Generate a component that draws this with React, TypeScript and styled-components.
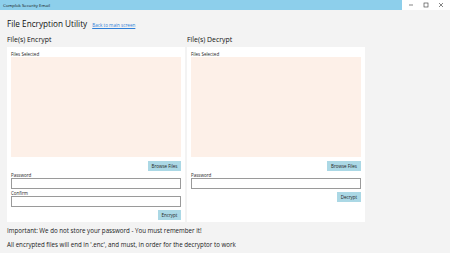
import React from "react";
import styled, { createGlobalStyle } from "styled-components";

const GlobalStyle = createGlobalStyle`
  html, body { margin: 0; padding: 0; }
  body {
    background: #f3f3f3;
    font-family: "Open Sans", "Noto Sans", "Liberation Sans", sans-serif;
    color: #1a1a1a;
  }
  * { box-sizing: border-box; }
`;

const Window = styled.div`
  width: 450px;
  height: 253px;
  display: flex;
  flex-direction: column;
  background: #f3f3f3;
  overflow: hidden;
`;

const TitleBar = styled.div`
  height: 10px;
  display: flex;
  flex-shrink: 0;
`;

const TitleArea = styled.div`
  flex: 1;
  background: #8dcfeb;
  font-size: 4.3px;
  line-height: 10px;
  padding-left: 3px;
  color: #111;
`;

const Controls = styled.div`
  width: 48px;
  background: #ffffff;
  display: flex;
  align-items: center;
  justify-content: space-around;
  padding: 0 2px;
`;

const ControlIcon = styled.svg`
  width: 6px;
  height: 6px;
  display: block;
`;

const Content = styled.div`
  padding: 0 7px;
  display: flex;
  flex-direction: column;
  flex: 1;
`;

const Header = styled.div`
  display: flex;
  align-items: baseline;
  gap: 5px;
  margin-top: 8px;
  height: 12px;
`;

const Title = styled.h1`
  margin: 0;
  font-size: 8.2px;
  font-weight: 400;
  line-height: 12px;
  color: #111;
`;

const BackLink = styled.a`
  font-size: 4.6px;
  color: #2f7fd8;
  text-decoration: underline;
  cursor: pointer;
`;

const Columns = styled.div`
  display: grid;
  grid-template-columns: 178px 178px;
  column-gap: 2px;
  margin-top: 5px;
`;

const Section = styled.section`
  display: flex;
  flex-direction: column;
`;

const SectionTitle = styled.h2`
  margin: 0;
  font-size: 6.9px;
  font-weight: 400;
  line-height: 9px;
  height: 9px;
  margin-bottom: 3px;
  color: #111;
`;

const Panel = styled.div`
  background: #ffffff;
  padding: 4px 4px 2px 4px;
  display: flex;
  flex-direction: column;
  flex: 1;
  height: 175px;
`;

const Label = styled.div<{ $gap?: number }>`
  font-size: 4.5px;
  line-height: 6px;
  height: 6px;
  color: #222;
  margin-top: ${(p) => p.$gap ?? 0}px;
`;

const FileList = styled.div`
  height: 100px;
  background: #fdf0e8;
`;

const ButtonRow = styled.div<{ $gap: number }>`
  display: flex;
  justify-content: flex-end;
  margin-top: ${(p) => p.$gap}px;
`;

const Button = styled.button<{ $w: number }>`
  width: ${(p) => p.$w}px;
  height: 10px;
  padding: 0;
  border: none;
  background: #abd8e5;
  font-family: inherit;
  font-size: 4.5px;
  color: #222;
  line-height: 10px;
`;

const Input = styled.input`
  display: block;
  width: 100%;
  height: 11px;
  border: 1px solid #9a9a9a;
  background: #fff;
  padding: 0 2px;
  font-size: 5px;
  outline: none;
`;

const Note = styled.p<{ $top: number }>`
  margin: ${(p) => p.$top}px 0 0 0;
  font-size: 6.2px;
  line-height: 9px;
  color: #1a1a1a;
`;

export default function App() {
  return (
    <>
      <GlobalStyle />
      <Window>
        <TitleBar>
          <TitleArea>Complok Security Email</TitleArea>
          <Controls>
            <ControlIcon viewBox="0 0 6 6">
              <line x1="1" y1="3" x2="5" y2="3" stroke="#333" strokeWidth="0.6" />
            </ControlIcon>
            <ControlIcon viewBox="0 0 6 6">
              <rect x="1" y="1" width="4" height="4" fill="none" stroke="#333" strokeWidth="0.6" />
            </ControlIcon>
            <ControlIcon viewBox="0 0 6 6">
              <path d="M1 1 L5 5 M5 1 L1 5" stroke="#333" strokeWidth="0.6" />
            </ControlIcon>
          </Controls>
        </TitleBar>
        <Content>
          <Header>
            <Title>File Encryption Utility</Title>
            <BackLink>Back to main screen</BackLink>
          </Header>
          <Columns>
            <Section>
              <SectionTitle>File(s) Encrypt</SectionTitle>
              <Panel>
                <Label>Files Selected</Label>
                <FileList />
                <ButtonRow $gap={4}>
                  <Button $w={33}>Browse Files</Button>
                </ButtonRow>
                <Label $gap={1}>Password</Label>
                <Input type="password" />
                <Label $gap={1}>Confirm</Label>
                <Input type="password" />
                <ButtonRow $gap={3}>
                  <Button $w={23}>Encrypt</Button>
                </ButtonRow>
              </Panel>
            </Section>
            <Section>
              <SectionTitle>File(s) Decrypt</SectionTitle>
              <Panel>
                <Label>Files Selected</Label>
                <FileList />
                <ButtonRow $gap={4}>
                  <Button $w={34}>Browse Files</Button>
                </ButtonRow>
                <Label $gap={1}>Password</Label>
                <Input type="password" />
                <ButtonRow $gap={3}>
                  <Button $w={24}>Decrypt</Button>
                </ButtonRow>
              </Panel>
            </Section>
          </Columns>
          <Note $top={4}>Important: We do not store your password - You must remember it!</Note>
          <Note $top={5}>All encrypted files will end in '.enc', and must, in order for the decryptor to work</Note>
        </Content>
      </Window>
    </>
  );
}
